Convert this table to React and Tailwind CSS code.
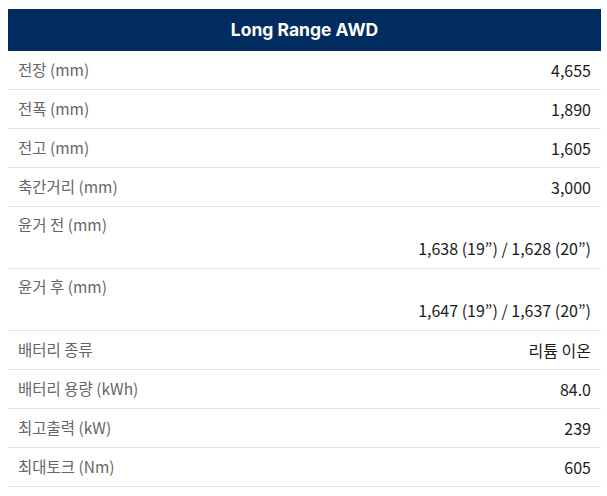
const rows = [
  ["전장 (mm)", "4,655"],
  ["전폭 (mm)", "1,890"],
  ["전고 (mm)", "1,605"],
  ["축간거리 (mm)", "3,000"],
  ["윤거 전 (mm)", "1,638 (19”) / 1,628 (20”)", true],
  ["윤거 후 (mm)", "1,647 (19”) / 1,637 (20”)", true],
  ["배터리 종류", "리튬 이온"],
  ["배터리 용량 (kWh)", "84.0"],
  ["최고출력 (kW)", "239"],
  ["최대토크 (Nm)", "605"],
];

export default function App() {
  return (
    <div className="bg-white min-h-[496px] pt-[9px] pl-2 pr-[6px]" style={{ fontFamily: '"Noto Sans CJK KR", "Noto Sans", sans-serif' }}>
      <div className="w-[593px]">
        <div className="h-[42px] bg-[#002c5f] flex items-center justify-center text-white text-[17.5px] font-bold" style={{ fontFamily: 'Inter, sans-serif' }}>
          Long Range AWD
        </div>
        {rows.map(([label, value, stacked], i) =>
          stacked ? (
            <div key={i} className="border-b border-[#e4e4e4] px-[10px] pt-[7px] pb-[10px] flex flex-col gap-[4px] leading-[20px]">
              <div className="text-[#666] text-[15.5px]">{label}</div>
              <div className="text-right text-[#1a1a1a] text-[16px]">{value}</div>
            </div>
          ) : (
            <div key={i} className="border-b border-[#e4e4e4] px-[10px] h-[39px] flex items-center justify-between">
              <span className="text-[#666] text-[15.5px]">{label}</span>
              <span className="text-[#1a1a1a] text-[16px]">{value}</span>
            </div>
          )
        )}
      </div>
    </div>
  );
}
